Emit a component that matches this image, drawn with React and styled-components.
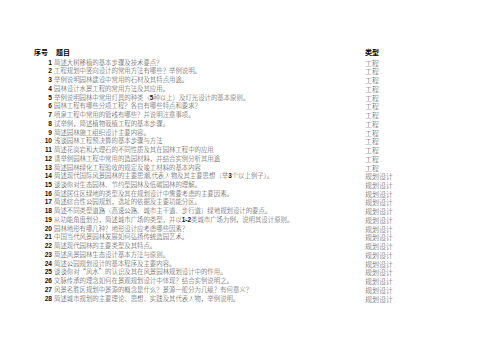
import styled, { createGlobalStyle } from "styled-components";

const GlobalStyle = createGlobalStyle`
  body {
    margin: 0;
    background: #ffffff;
  }
`;

const Sheet = styled.div`
  padding-top: 48px;
  font-family: "Noto Sans CJK SC", "Liberation Serif", serif;
  font-size: 7px;
  color: #4a4a4a;
`;

const Grid = styled.div`
  display: grid;
  grid-template-columns: 52px 309px 1fr;
  column-gap: 2px;
  line-height: 8.74px;
`;

const Head = styled.div`
  font-weight: 700;
  color: #000;
  padding-left: ${(p) => p.$indent || 0}px;
  margin-bottom: 2px;
  white-space: nowrap;
`;

const Num = styled.div`
  text-align: right;
  font-family: "Liberation Sans", sans-serif;
  font-size: 6.6px;
  font-weight: 700;
  color: #111;
`;

const Text = styled.div`
  font-size: 6.4px;
  font-weight: 300;
  white-space: nowrap;
`;

const Digit = styled.span`
  font-family: "Liberation Sans", sans-serif;
  font-weight: 700;
  color: #111;
`;

const Type = styled.div`
  font-weight: 300;
  white-space: nowrap;
`;

const questions = [
  "简述大树移植的基本步骤及技术要点？",
  "工程规划中竖向设计的常用方法有哪些？举例说明。",
  "举例说明园林建设中常用的石材及其特点用途。",
  "园林设计水景工程的常用方法及其应用。",
  "举例说明园林中常用灯具的种类（5种以上）及灯光设计的基本原则。",
  "园林工程有哪些分项工程？各自有哪些特点和要求？",
  "喷泉工程中常用的管线有哪些？并说明注意事项。",
  "试举例，简述植物栽植工程的基本步骤。",
  "简述园林施工组织设计主要内容。",
  "浅谈园林工程预决算的基本步骤与方法",
  "简述花岗岩和大理石的不同性质及其在园林工程中的应用",
  "请举例园林工程中常用的造园材料，并结合实例分析其用途",
  "简述园林绿化工程验收的规定及竣工材料的基本内容",
  "简述现代国际风景园林的主要思潮,代表人物及其主要思想（举3个以上例子）。",
  "谈谈你对生态园林、节约型园林及低碳园林的理解。",
  "简述居住区绿地的类型及其在规划设计中需要考虑的主要因素。",
  "简述综合性公园规划，选址的依据及主要功能分区。",
  "简述不同类型道路（高速公路、城市主干道、步行道）绿地规划设计的要点。",
  "从功能角度划分，简述城市广场的类型，并以1-2类城市广场为例，说明其设计原则。",
  "园林地形有哪几种？地形设计应考虑哪些因素？",
  "中国当代风景园林发展如何弘扬传统造园艺术。",
  "简述现代园林的主要类型及其特点。",
  "简述风景园林生态设计基本方法与原则。",
  "简述公园规划设计的基本程序及主要内容。",
  "谈谈你对“风水”的认识及其在风景园林规划设计中的作用。",
  "文脉传承的理念如何在景观规划设计中体现？结合实例说明之。",
  "风景名胜区规划中景源的概念是什么？景源一般分为几级？有何意义？",
  "简述城市规划的主要理论、思想、实践及其代表人物，举例说明。",
];

function withDigits(s) {
  return s.split(/(\d[\d-]*)/).map((part, i) =>
    /^\d/.test(part) ? <Digit key={i}>{part}</Digit> : part
  );
}

export default function App() {
  return (
    <Sheet>
      <GlobalStyle />
      <Grid>
        <Head $indent={34}>序号</Head>
        <Head $indent={2}>题目</Head>
        <Head>类型</Head>
        {questions.map((q, i) => (
          <>
            <Num key={"n" + i}>{i + 1}</Num>
            <Text key={"t" + i}>{withDigits(q)}</Text>
            <Type key={"c" + i}>{i < 13 ? "工程" : "规划设计"}</Type>
          </>
        ))}
      </Grid>
    </Sheet>
  );
}
